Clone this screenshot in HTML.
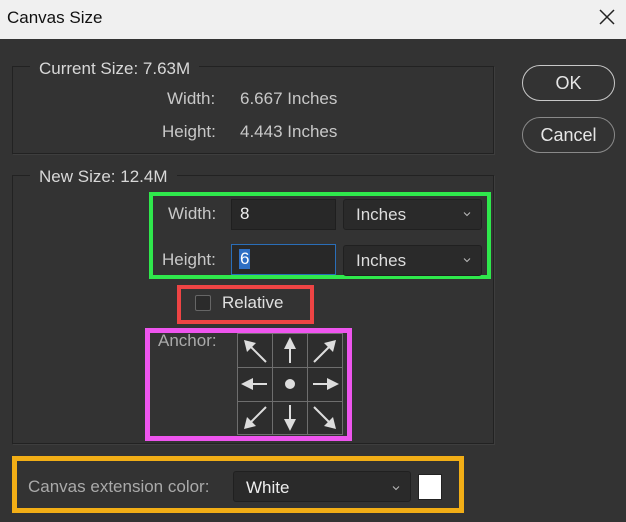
<!DOCTYPE html>
<html><head><style>
*{margin:0;padding:0;box-sizing:border-box}
body{width:626px;height:522px;background:#333333;font-family:"Liberation Sans","DejaVu Sans",sans-serif;position:relative;overflow:hidden;color:#c8c8c8}
.a{position:absolute}
.t{font-size:17px;white-space:nowrap}
.grp{border:1px solid #222;box-shadow:1px 1px 0 #3e3e3e}
.inp{background:#282828;border:1px solid #1f1f1f;color:#eee}
.dd{background:#2a2a2a;border:1px solid #202020;border-radius:3px;color:#ddd}
.btn{border:1.5px solid #c8c8c8;border-radius:18px;color:#e6e6e6;font-size:18px;text-align:center}
.chev{position:absolute;right:8px;top:8px;width:12px;height:12px}
</style></head><body>
<div class="a" style="left:0;top:0;width:626px;height:39px;background:#f0f0f0"></div>
<div class="a t" style="left:7px;top:8px;color:#111;font-size:17px">Canvas Size</div>
<svg class="a" style="left:598px;top:8px" width="18" height="18"><path d="M2 2L16 16M16 2L2 16" stroke="#222" stroke-width="1.5"/></svg>

<div class="a grp" style="left:12px;top:66px;width:482px;height:88px"></div>
<div class="a t" style="left:30px;top:59px;background:#333;padding:0 9px;color:#d8d8d8">Current Size: 7.63M</div>
<div class="a t" style="left:167px;top:89px">Width:</div>
<div class="a t" style="left:240px;top:89px">6.667 Inches</div>
<div class="a t" style="left:162px;top:122px">Height:</div>
<div class="a t" style="left:240px;top:122px">4.443 Inches</div>

<div class="a btn" style="left:522px;top:65px;width:93px;height:36px;line-height:34px">OK</div>
<div class="a btn" style="left:522px;top:117px;width:93px;height:36px;line-height:34px;border-color:#8a8a8a">Cancel</div>

<div class="a grp" style="left:12px;top:175px;width:482px;height:269px"></div>
<div class="a t" style="left:30px;top:167px;background:#333;padding:0 9px;color:#d8d8d8">New Size: 12.4M</div>

<div class="a" style="left:149px;top:192px;width:342px;height:87px;border:4px solid #2fe84c"></div>
<div class="a t" style="left:168px;top:204px">Width:</div>
<div class="a inp" style="left:231px;top:199px;width:105px;height:31px"></div>
<div class="a t" style="left:240px;top:204px;color:#f0f0f0">8</div>
<div class="a dd" style="left:343px;top:199px;width:139px;height:31px"><span class="t" style="position:absolute;left:12px;top:5px">Inches</span><svg class="chev" viewBox="0 0 12 12"><path d="M3 4.5L6 7.5L9 4.5" stroke="#bbb" fill="none" stroke-width="1"/></svg></div>
<div class="a t" style="left:162px;top:250px">Height:</div>
<div class="a inp" style="left:231px;top:244px;width:105px;height:31px;border-color:#2a6eb8"></div>
<div class="a t" style="left:239px;top:249px;background:#2d6fc4;color:#fff;padding:0 1px">6</div>
<div class="a dd" style="left:343px;top:245px;width:139px;height:31px"><span class="t" style="position:absolute;left:12px;top:5px">Inches</span><svg class="chev" viewBox="0 0 12 12"><path d="M3 4.5L6 7.5L9 4.5" stroke="#bbb" fill="none" stroke-width="1"/></svg></div>

<div class="a" style="left:177px;top:285px;width:137px;height:39px;border:4px solid #ee4444"></div>
<div class="a" style="left:195px;top:295px;width:16px;height:16px;border:1px solid #666;border-radius:2px;background:#2b2b2b"></div>
<div class="a t" style="left:222px;top:293px;color:#e0e0e0">Relative</div>

<div class="a" style="left:145px;top:328px;width:207px;height:113px;border:5px solid #ee55ee"></div>
<div class="a t" style="left:158px;top:331px;color:#aaa">Anchor:</div>
<svg class="a" style="left:237px;top:333px" width="106" height="102" viewBox="0 0 106 102">
<g fill="#2d2d2d" stroke="#6e6e6e" stroke-width="1"><rect x="0.5" y="0.5" width="35" height="34"/><rect x="35.5" y="0.5" width="35" height="34"/><rect x="70.5" y="0.5" width="35" height="34"/><rect x="0.5" y="34.5" width="35" height="34"/><rect x="35.5" y="34.5" width="35" height="34"/><rect x="70.5" y="34.5" width="35" height="34"/><rect x="0.5" y="68.5" width="35" height="33"/><rect x="35.5" y="68.5" width="35" height="33"/><rect x="70.5" y="68.5" width="35" height="33"/></g>
<g stroke="#ddd" stroke-width="2" fill="#ddd">
<line x1="29" y1="29" x2="12" y2="12"/><polygon points="7,7 19,10 10,19" stroke="none"/>
<line x1="53" y1="30" x2="53" y2="12"/><polygon points="53,4 59,16 47,16" stroke="none"/>
<line x1="77" y1="29" x2="94" y2="12"/><polygon points="99,7 87,10 96,19" stroke="none"/>
<line x1="30" y1="51" x2="12" y2="51"/><polygon points="4,51 16,45 16,57" stroke="none"/>
<circle cx="53" cy="51" r="5" stroke="none"/>
<line x1="76" y1="51" x2="94" y2="51"/><polygon points="102,51 90,45 90,57" stroke="none"/>
<line x1="29" y1="74" x2="12" y2="91"/><polygon points="7,96 10,84 19,93" stroke="none"/>
<line x1="53" y1="72" x2="53" y2="90"/><polygon points="53,98 47,86 59,86" stroke="none"/>
<line x1="77" y1="74" x2="94" y2="91"/><polygon points="99,96 96,84 87,93" stroke="none"/>
</g></svg>

<div class="a" style="left:12px;top:456px;width:452px;height:57px;border:5px solid #f2ae16"></div>
<div class="a t" style="left:28px;top:477px;color:#aaa">Canvas extension color:</div>
<div class="a dd" style="left:233px;top:471px;width:178px;height:31px"><span class="t" style="position:absolute;left:12px;top:6px;color:#eee">White</span><svg class="chev" viewBox="0 0 12 12" style="top:10px"><path d="M3 4.5L6 7.5L9 4.5" stroke="#bbb" fill="none" stroke-width="1"/></svg></div>
<div class="a" style="left:418px;top:474px;width:24px;height:26px;background:#fff;border:1px solid #222"></div>
</body></html>
